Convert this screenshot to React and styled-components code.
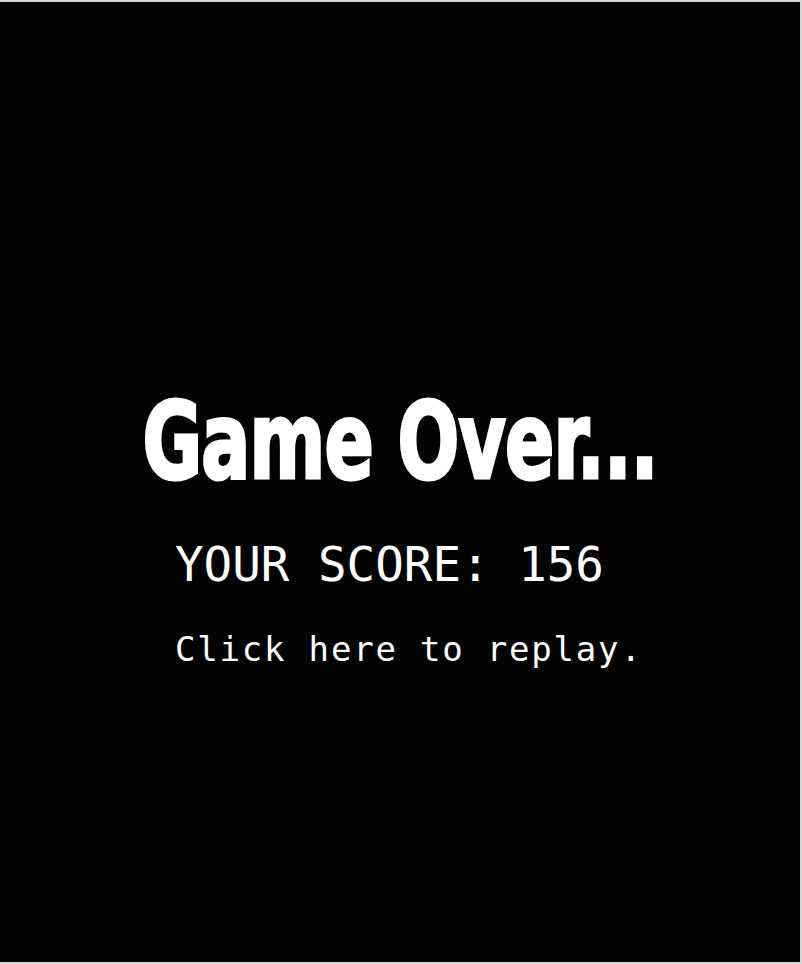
import styled, { createGlobalStyle } from "styled-components";

const GlobalStyle = createGlobalStyle`
  html, body {
    margin: 0;
    padding: 0;
    background: #d6d6d6;
  }
`;

export default function App() {
  return (
    <>
      <GlobalStyle />
      <Screen>
        <Title>Game Over...</Title>
        <Info>
          <Score>YOUR SCORE: 156</Score>
          <Replay>Click here to replay.</Replay>
        </Info>
      </Screen>
    </>
  );
}

const Screen = styled.div`
  width: 800px;
  height: 960px;
  margin-top: 2px;
  box-sizing: border-box;
  padding-top: 391px;
  background: #030303;
  color: #ffffff;
  display: flex;
  flex-direction: column;
`;

const Title = styled.h1`
  margin: 0;
  font-family: "DejaVu Sans Condensed", "Liberation Sans", sans-serif;
  font-weight: 700;
  font-size: 101px;
  line-height: 100px;
  text-align: center;
  letter-spacing: -1px;
  -webkit-text-stroke: 3px #ffffff;
  transform: scale(0.8, 1.05);
  transform-origin: 50% 85%;
`;

const Info = styled.div`
  display: flex;
  flex-direction: column;
  padding-left: 175px;
  font-family: "DejaVu Sans Mono", "Liberation Mono", monospace;
`;

const Score = styled.div`
  margin-top: 48px;
  font-size: 47.5px;
  line-height: 48px;
`;

const Replay = styled.div`
  margin-top: 43px;
  font-size: 34px;
  line-height: 34px;
  letter-spacing: 1.8px;
`;
